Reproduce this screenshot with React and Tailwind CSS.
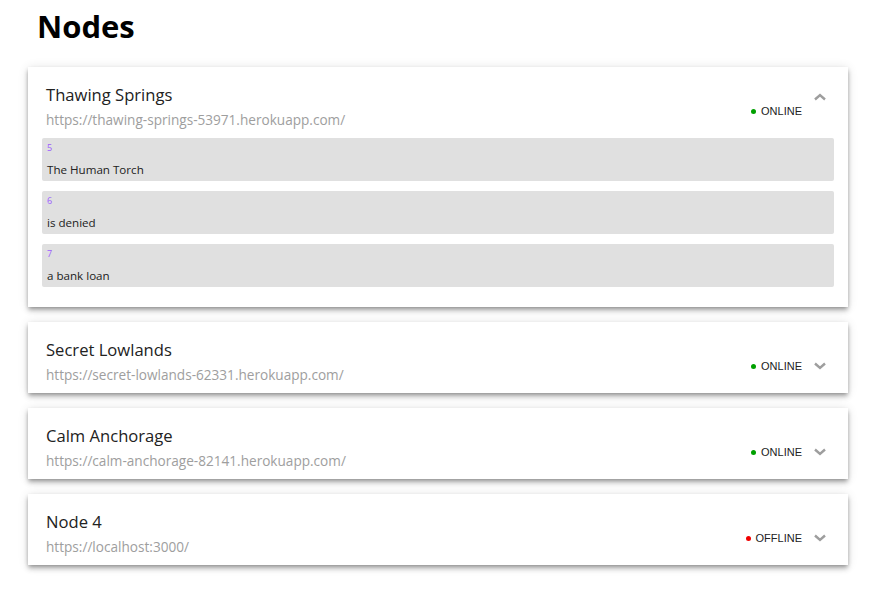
import React, { useState } from "react";

const nodes = [
  {
    name: "Thawing Springs",
    url: "https://thawing-springs-53971.herokuapp.com/",
    online: true,
    blocks: [
      { index: 5, data: "The Human Torch" },
      { index: 6, data: "is denied" },
      { index: 7, data: "a bank loan" },
    ],
  },
  {
    name: "Secret Lowlands",
    url: "https://secret-lowlands-62331.herokuapp.com/",
    online: true,
    blocks: [],
  },
  {
    name: "Calm Anchorage",
    url: "https://calm-anchorage-82141.herokuapp.com/",
    online: true,
    blocks: [],
  },
  {
    name: "Node 4",
    url: "https://localhost:3000/",
    online: false,
    blocks: [],
  },
];

const Chevron = ({ up }) => (
  <svg
    width="14"
    height="10"
    viewBox="0 0 14 10"
    className={up ? "rotate-180 -translate-y-[14px]" : ""}
  >
    <path
      d="M2 2.5 L7 7 L12 2.5"
      fill="none"
      stroke="#9e9e9e"
      strokeWidth="2.4"
    />
  </svg>
);

const Node = ({ node, expanded, onToggle }) => {
  return (
    <div className="bg-white shadow-[0_2px_4px_-1px_rgba(0,0,0,0.3),0_4px_5px_0_rgba(0,0,0,0.18),0_1px_10px_0_rgba(0,0,0,0.12)]">
      <div
        className="flex justify-between pl-[18px] pr-[21px] h-[71px] cursor-pointer"
        onClick={onToggle}
      >
        <div className="flex flex-col pt-[17px]">
          <div className="text-[16.6px] leading-[22px] text-[#222]">
            {node.name}
          </div>
          <div className="text-[13.6px] leading-[20px] text-[#9e9e9e] mt-[4px]">
            {node.url}
          </div>
        </div>
        <div className="flex items-center gap-[11px] mt-[39px] h-[10px]">
          <div className="flex items-center gap-[5px]">
            <span
              className={
                "w-[5px] h-[5px] rounded-full " +
                (node.online ? "bg-[#00a000]" : "bg-[#f00000]")
              }
            />
            <span className="text-[11px] leading-[10px] text-[#222] font-['Liberation_Sans',sans-serif]">
              {node.online ? "ONLINE" : "OFFLINE"}
            </span>
          </div>
          <Chevron up={expanded} />
        </div>
      </div>
      {expanded && (
        <div className="flex flex-col gap-[10px] px-[14px] pb-[20px]">
          {node.blocks.map((b) => (
            <div
              key={b.index}
              className="bg-[#e0e0e0] rounded-[2px] h-[43px] px-[5px] pt-[4px]"
            >
              <div className="text-[9px] leading-[12px] text-[#9c5cff]">
                {b.index}
              </div>
              <div className="text-[11.6px] leading-[16px] text-[#222] mt-[8px]">
                {b.data}
              </div>
            </div>
          ))}
        </div>
      )}
    </div>
  );
};

const App = () => {
  const [open, setOpen] = useState(0);

  return (
    <div className="min-h-screen bg-white font-['Open_Sans',sans-serif] pl-[28px] pr-[41px]">
      <h1 className="text-[31px] font-bold text-black pl-[9px] pt-[6px] leading-[40px] h-[67px]">
        Nodes
      </h1>
      <div className="flex flex-col gap-[15px]">
        {nodes.map((n, i) => (
          <Node
            key={n.name}
            node={n}
            expanded={open === i}
            onToggle={() => setOpen(open === i ? -1 : i)}
          />
        ))}
      </div>
    </div>
  );
};

export default App;
